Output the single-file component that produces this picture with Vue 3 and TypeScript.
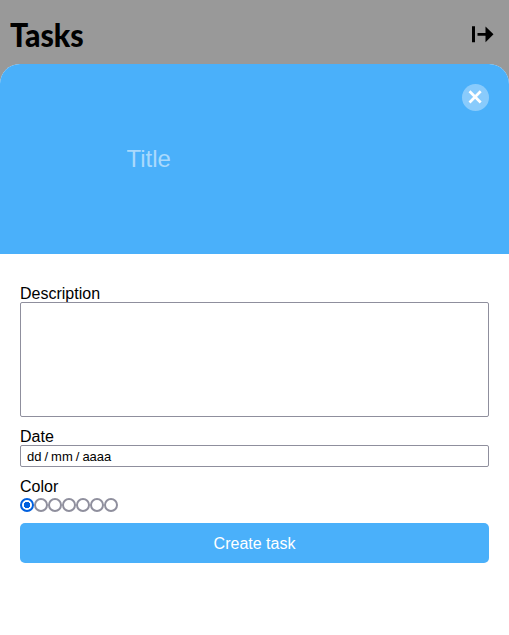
<script setup lang="ts">
import { ref } from 'vue'

const title = ref('')
const description = ref('')
const date = ref('')
const color = ref(0)
const colors: number[] = [0, 1, 2, 3, 4, 5, 6]
</script>

<template>
  <div class="page">
    <header class="topbar">
      <h1>Tasks</h1>
      <button class="logout" type="button" aria-label="Log out">
        <svg width="24" height="20" viewBox="0 0 24 20">
          <path d="M2 2.300H5V18.300H2Z M7.500 9H15.500V2.500L23.500 10.300L15.500 18.200V11.700H7.500Z" />
        </svg>
      </button>
    </header>
    <form class="sheet" @submit.prevent>
      <div class="hero">
        <button class="close" type="button" aria-label="Close">
          <svg width="27" height="27" viewBox="0 0 27 27">
            <path d="M7.500 7.300L18.700 18.500M18.700 7.300L7.500 18.500" />
          </svg>
        </button>
        <input v-model="title" class="title" type="text" placeholder="Title" />
      </div>
      <div class="fields">
        <label for="description">Description</label>
        <textarea id="description" v-model="description"></textarea>
        <label for="date">Date</label>
        <input id="date" v-model="date" class="date" type="text" placeholder="dd / mm / aaaa" />
        <span class="label">Color</span>
        <div class="colors">
          <input v-for="c in colors" :key="c" v-model="color" type="radio" name="color" :value="c" />
        </div>
        <button class="create" type="submit">Create task</button>
      </div>
    </form>
  </div>
</template>

<style>
body {
  background: #999;
}
</style>

<style scoped>
.page {
  display: flex;
  flex-direction: column;
  height: 635px;
  overflow: hidden;
  background: #999;
  color: #000;
  font: 16px/18px "Liberation Sans", Arial, sans-serif;
}
.page * {
  box-sizing: border-box;
}
.topbar {
  display: flex;
  flex: none;
  justify-content: space-between;
  height: 64px;
  padding: 14px 15px 0 10px;
}
h1 {
  margin: 0;
  font: 900 32px/42px Lato, sans-serif;
  transform: scaleX(0.945);
  transform-origin: left;
}
button {
  padding: 0;
  border: 0;
  background: none;
  font: inherit;
}
svg {
  display: block;
}
.logout {
  width: 24px;
  height: 20px;
  margin-top: 10px;
}
.sheet {
  flex: 1;
  overflow: hidden;
  border-radius: 20px 20px 0 0;
  background: #fff;
}
.hero {
  display: flex;
  flex-direction: column;
  align-items: center;
  height: 190px;
  padding: 20px;
  background: #4ab0fa;
}
.close {
  align-self: flex-end;
  width: 27px;
  height: 27px;
  border-radius: 50%;
  background: rgba(255, 255, 255, 0.35);
}
.close path {
  fill: none;
  stroke: #fff;
  stroke-width: 2.700;
}
.title {
  width: 256px;
  height: 28px;
  margin-top: 34px;
  padding: 0;
  border: 0;
  outline: 0;
  background: transparent;
  color: #fff;
  font: 24px/28px "Liberation Sans", Arial, sans-serif;
}
.title::placeholder {
  color: rgba(255, 255, 255, 0.54);
  opacity: 1;
}
.fields {
  display: flex;
  flex-direction: column;
  padding: 31px 20px 0;
}
textarea,
.date {
  border: 1px solid #8f8f9d;
  border-radius: 2px;
  outline: 0;
  background: #fff;
}
label {
  height: 17px;
}
textarea {
  height: 115px;
  margin: 0 0 11px;
  resize: none;
}
.date {
  height: 22px;
  margin: 0 0 11px;
  padding: 1px 6px;
  font: 13px/18px "Liberation Sans", Arial, sans-serif;
  word-spacing: -0.600px;
}
.date::placeholder {
  color: #000;
  opacity: 1;
}
.colors {
  display: flex;
  padding-top: 2px;
}
.colors input {
  flex: none;
  width: 14px;
  height: 14px;
  margin: 0;
  border: 2px solid #8f8f9d;
  border-radius: 50%;
  background: #fff;
  appearance: none;
}
.colors input:checked {
  border-color: #0060df;
  background: radial-gradient(circle, #0060df 2.900px, #fff 3.500px);
}
.create {
  height: 40px;
  margin-top: 11px;
  padding-top: 2px;
  border-radius: 5px;
  background: #4ab0fa;
  color: #fff;
}
</style>
